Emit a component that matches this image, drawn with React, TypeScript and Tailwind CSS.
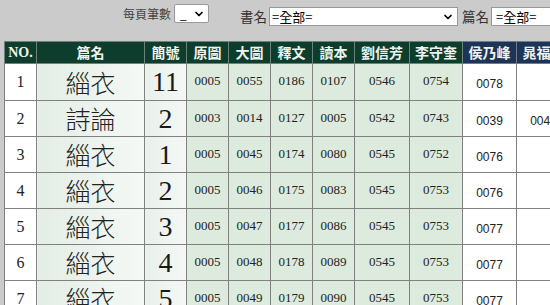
import { ChevronDown } from "lucide-react";

type Row = {
  no: number;
  title: string;
  slip: string;
  vals: string[];
  hou: string;
  chao: string;
};

const rows: Row[] = [
  { no: 1, title: "緇衣", slip: "11", vals: ["0005", "0055", "0186", "0107", "0546", "0754"], hou: "0078", chao: "" },
  { no: 2, title: "詩論", slip: "2", vals: ["0003", "0014", "0127", "0005", "0542", "0743"], hou: "0039", chao: "0040" },
  { no: 3, title: "緇衣", slip: "1", vals: ["0005", "0045", "0174", "0080", "0545", "0752"], hou: "0076", chao: "" },
  { no: 4, title: "緇衣", slip: "2", vals: ["0005", "0046", "0175", "0083", "0545", "0753"], hou: "0076", chao: "" },
  { no: 5, title: "緇衣", slip: "3", vals: ["0005", "0047", "0177", "0086", "0545", "0753"], hou: "0077", chao: "" },
  { no: 6, title: "緇衣", slip: "4", vals: ["0005", "0048", "0178", "0089", "0545", "0753"], hou: "0077", chao: "" },
  { no: 7, title: "緇衣", slip: "5", vals: ["0005", "0049", "0179", "0090", "0545", "0753"], hou: "0077", chao: "" },
];

const serif = "font-['Liberation_Serif','Noto_Sans_CJK_TC',serif]";
const cjk = "font-['Noto_Sans_CJK_TC','Liberation_Sans',sans-serif]";

const greenHead = ["原圖", "大圖", "釋文", "讀本", "劉信芳", "李守奎"];
const widths = [42, 42, 42, 42, 55, 53];

const App = () => {
  return (
    <div className="w-[550px] h-[305px] overflow-hidden bg-[#cbcbcb]">
      {/* filter bar */}
      <div className={`flex h-[41px] w-[640px] items-start whitespace-nowrap ${cjk}`}>
        <div className="ml-[123px] mt-[4px] flex shrink-0 items-center">
          <span className="text-[12px] leading-[19px] text-[#444]">每頁筆數</span>
          <div className="ml-[3px] flex h-[19px] w-[35px] items-center justify-between rounded-[2px] border border-[#999] bg-white pl-[5px] pr-[3px]">
            <span className="text-[12px] leading-none text-black">_</span>
            <ChevronDown size={12} strokeWidth={3.5} className="text-black" />
          </div>
        </div>
        <div className="ml-[31px] mt-[7px] flex shrink-0 items-center">
          <span className="text-[13.5px] leading-[19px] text-[#333]">書名</span>
          <div className="ml-[2px] flex h-[19px] w-[189px] items-center justify-between border border-[#999] bg-white pl-[2px] pr-[3px]">
            <span className="text-[13px] leading-none text-black">=全部=</span>
            <ChevronDown size={12} strokeWidth={3.5} className="text-black" />
          </div>
        </div>
        <div className="ml-[4px] mt-[7px] flex shrink-0 items-center">
          <span className="text-[13.5px] leading-[19px] text-[#333]">篇名</span>
          <div className="ml-[2px] flex h-[19px] w-[80px] items-center border border-[#999] bg-white pl-[4px]">
            <span className="text-[13px] leading-none text-black">=全部=</span>
          </div>
        </div>
      </div>

      {/* table */}
      <table className="ml-[4px] w-[566px] table-fixed border-collapse">
        <colgroup>
          <col className="w-[32px]" />
          <col className="w-[108px]" />
          <col className="w-[42px]" />
          {widths.map((w, i) => (
            <col key={i} style={{ width: w }} />
          ))}
          <col className="w-[54px]" />
          <col className="w-[54px]" />
        </colgroup>
        <thead>
          <tr className="h-[22px] text-[14px] font-bold text-[#eef3ee]">
            <th className={`border border-[#6f8279] bg-[#0c3d2d] text-[14px] ${serif}`}>NO.</th>
            <th className={`border border-[#6f8279] bg-[#0c3d2d] ${cjk}`}>篇名</th>
            <th className={`border border-[#6f8279] bg-[#0c3d2d] ${cjk}`}>簡號</th>
            {greenHead.map((h) => (
              <th key={h} className={`border border-[#6f8279] bg-[#0c3d2d] ${cjk}`}>
                {h}
              </th>
            ))}
            <th className={`border border-[#6f7c8f] bg-[#1d3456] ${cjk}`}>侯乃峰</th>
            <th className={`whitespace-nowrap border border-[#6f7c8f] bg-[#1d3456] ${cjk}`}>晁福林</th>
          </tr>
        </thead>
        <tbody>
          {rows.map((r) => (
            <tr key={r.no} className="h-[36px] first:h-[37px]">
              <td className={`border border-[#808080] bg-white text-center text-[16px] text-[#222] ${serif}`}>
                {r.no}
              </td>
              <td
                className={`border border-[#808080] bg-gradient-to-r from-[#e3ede5] to-[#f5f9f6] text-center text-[25px] font-light leading-none text-[#222] ${cjk}`}
              >
                {r.title}
              </td>
              <td
                className={`border border-[#808080] bg-gradient-to-r from-[#e9f1eb] to-[#f4f8f5] text-center text-[28px] leading-none text-[#1a1a1a] ${serif}`}
              >
                {r.slip}
              </td>
              {r.vals.map((v, i) => (
                <td
                  key={i}
                  className={`border border-[#808080] bg-[#dcebdd] pb-[2px] text-center text-[13px] text-[#222] ${serif}`}
                >
                  {v}
                </td>
              ))}
              <td className="border border-[#808080] bg-white pt-[4px] text-center font-['Liberation_Sans',sans-serif] text-[12px] text-[#222]">
                {r.hou}
              </td>
              <td className="border border-[#808080] bg-white pt-[4px] text-center font-['Liberation_Sans',sans-serif] text-[12px] text-[#222]">
                {r.chao}
              </td>
            </tr>
          ))}
        </tbody>
      </table>
    </div>
  );
};

export default App;
